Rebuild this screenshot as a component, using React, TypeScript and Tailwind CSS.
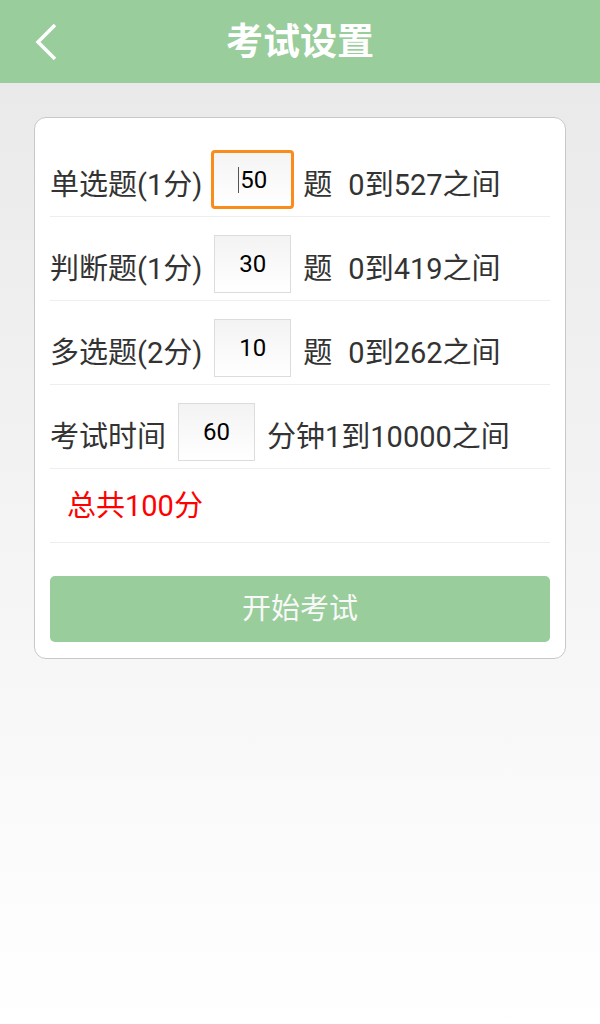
import React from 'react'

const font = { fontFamily: 'Roboto, "Noto Sans CJK SC", sans-serif' }

const NumBox = ({ value, focused = false }: { value: string; focused?: boolean }) => (
  <div
    className={
      focused
        ? 'mx-[-3px] flex h-[59px] w-[83px] items-center justify-center rounded-[4px] border-[3px] border-[#f98c1a] bg-gradient-to-b from-[#f4f4f4] to-white'
        : 'flex h-[58px] w-[77px] items-center justify-center border border-[#dcdcdc] bg-gradient-to-b from-[#f3f3f3] to-white'
    }
  >
    {focused && <span className="mr-[1px] h-[26px] w-[1px] bg-[#555]" />}
    <span className="text-[24px] text-black">{value}</span>
  </div>
)

const Row = ({ children }: { children: React.ReactNode }) => (
  <div className="flex h-[84px] items-center gap-3 border-b border-[#eeeeee] pt-[10px] text-[29px] text-[#333]">
    {children}
  </div>
)

const questions = [
  { label: '单选题(1分)', value: '50', range: '0到527之间', focused: true },
  { label: '判断题(1分)', value: '30', range: '0到419之间' },
  { label: '多选题(2分)', value: '10', range: '0到262之间' },
]

export default function App() {
  return (
    <div style={font} className="flex min-h-[1024px] flex-col bg-gradient-to-b from-[#e8e8e8] to-white">
      <div className="relative flex h-[83px] items-center justify-center bg-[#99cd9b] pt-[3px]">
        <svg className="absolute left-[33px] top-[22px]" width="26" height="40" viewBox="0 0 26 40">
          <path d="M22 3 L5 20 L22 37" fill="none" stroke="white" strokeWidth="3.5" />
        </svg>
        <span className="text-[37px] font-bold text-white">考试设置</span>
      </div>

      <div className="mx-[34px] mt-[34px] rounded-[12px] border border-[#c8c8c8] bg-white px-[15px] pb-[16px] pt-[15px]">
        {questions.map(q => (
          <Row key={q.label}>
            <span className="mt-[12px]">{q.label}</span>
            <NumBox value={q.value} focused={q.focused} />
            <span className="mt-[12px]">题</span>
            <span className="ml-1 mt-[12px]">{q.range}</span>
          </Row>
        ))}
        <Row>
          <span className="mt-[12px]">考试时间</span>
          <NumBox value="60" />
          <span className="mt-[12px]">分钟1到10000之间</span>
        </Row>
        <div className="flex h-[74px] items-center border-b border-[#eeeeee] pl-[17px] pt-[2px] text-[29px] text-[#ff0000]">
          总共100分
        </div>
        <button className="mt-[33px] flex h-[66px] w-full items-center justify-center rounded-[5px] bg-[#99cd9b] pt-[2px] text-[29px] text-[#f8f8f8]">
          开始考试
        </button>
      </div>
    </div>
  )
}
